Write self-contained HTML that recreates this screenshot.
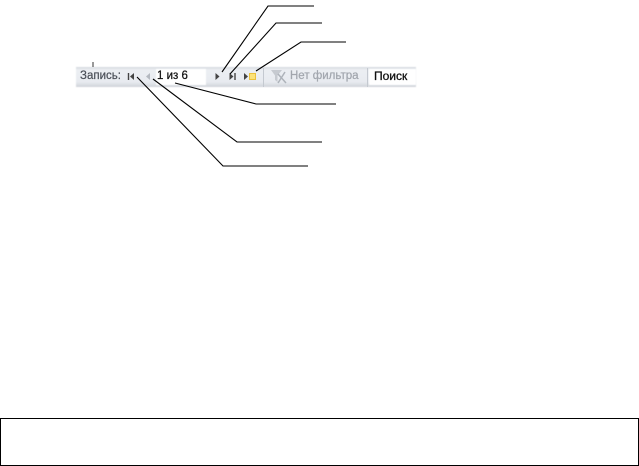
<!DOCTYPE html>
<html lang="ru">
<head>
<meta charset="utf-8">
<title>Запись</title>
<style>
html,body{margin:0;padding:0;background:#fff;}
body{width:639px;height:466px;position:relative;overflow:hidden;font-family:"Liberation Sans",sans-serif;}
#bar{position:absolute;left:76px;top:67px;width:340px;height:20px;background:linear-gradient(#d4d9df 0,#eceff3 15%,#e8ebf0 75%,#cfd3d9 100%);filter:blur(.4px);}
.t{position:absolute;white-space:nowrap;line-height:14px;font-size:11.5px;filter:blur(.3px);}
#inp{position:absolute;left:156px;top:69px;width:50px;height:16px;background:#fff;filter:blur(.4px);}
#srch{position:absolute;left:369px;top:69px;width:47px;height:16px;background:#fff;filter:blur(.4px);}
#sep1{position:absolute;left:263px;top:68px;width:1px;height:19px;background:#c4c9d0;}
#sep2{position:absolute;left:367px;top:68px;width:1px;height:19px;background:#c4c9d0;}
#box{position:absolute;left:0;top:418px;width:637px;height:46px;border:1px solid #000;background:#fff;}
svg{position:absolute;left:0;top:0;}
</style>
</head>
<body>
<div id="bar"></div>
<div id="inp"></div>
<div id="srch"></div>
<div id="sep1"></div>
<div id="sep2"></div>
<div class="t" style="left:80px;top:69px;color:#4a4f57;-webkit-text-stroke:.2px #4a4f57;">Запись:</div>
<div class="t" style="left:157px;top:69px;color:#111;-webkit-text-stroke:.25px #111;">1 из 6</div>
<div class="t" style="left:290px;top:69px;color:#a2a7ae;-webkit-text-stroke:.25px #a2a7ae;">Нет фильтра</div>
<div class="t" style="left:374px;top:69px;color:#111;-webkit-text-stroke:.3px #111;font-size:12px;">Поиск</div>
<svg width="639" height="466" viewBox="0 0 639 466">
  <path d="M93 62V67" stroke="#333" stroke-width="1" fill="none"/>
  <!-- nav icons -->
  <path d="M128.500 73V80" stroke="#444" stroke-width="1.400"/>
  <path d="M134 73V80L130 76.500Z" fill="#444"/>
  <path d="M150 73V80L146 76.500Z" fill="#b4b9c0"/>
  <path d="M215.500 73V80L219.500 76.500Z" fill="#444"/>
  <path d="M229.500 73V80L233.500 76.500Z" fill="#444"/>
  <path d="M235 73V80" stroke="#444" stroke-width="1.400"/>
  <path d="M244 73V80L248 76.500Z" fill="#444"/>
  <rect x="249.500" y="73.500" width="6" height="6" fill="#fbe27a" stroke="#ecc23e" stroke-width="1"/>
  <!-- funnel icon -->
  <path d="M271 70H282L277.500 75.500V82L275 80V75.500Z" fill="#c6cad0"/>
  <path d="M278 74L286 83M285 72L278 83" stroke="#aeb3ba" stroke-width="1.500" fill="none"/>
  <!-- leader lines -->
  <g fill="none" stroke="#000" stroke-width="1.100">
    <path d="M314 6H268L222 72"/>
    <path d="M322 23H276L230 74"/>
    <path d="M346 42H301L256 71"/>
    <path d="M336 104H256L175 83"/>
    <path d="M322 142H237L153 79"/>
    <path d="M308 166H223L137 77"/>
  </g>
</svg>
<div id="box"></div>
</body>
</html>
